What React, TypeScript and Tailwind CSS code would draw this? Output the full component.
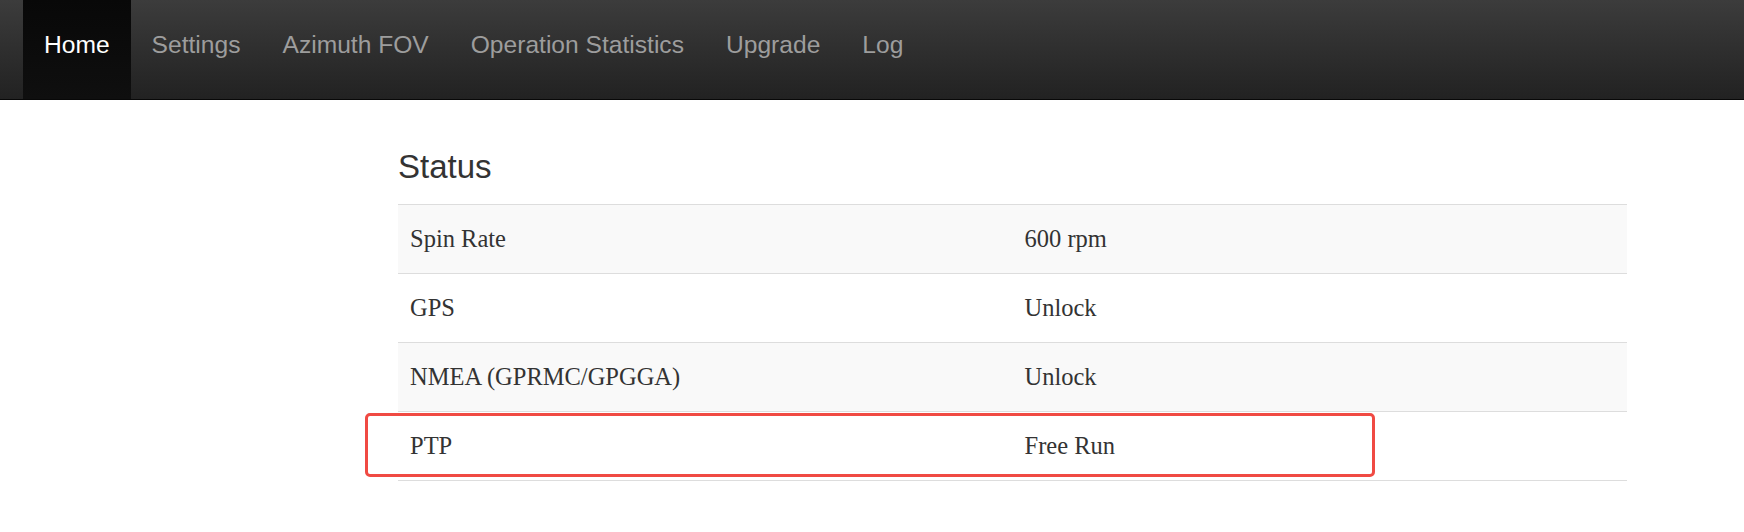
const links = ["Home", "Settings", "Azimuth FOV", "Operation Statistics", "Upgrade", "Log"];

const rows = [
  { name: "Spin Rate", value: "600 rpm" },
  { name: "GPS", value: "Unlock" },
  { name: "NMEA (GPRMC/GPGGA)", value: "Unlock" },
  { name: "PTP", value: "Free Run" },
];

export default function App() {
  return (
    <div className="relative min-h-[532px] bg-white text-[#333]">
      <nav className="h-[100px] border-b border-[#080808] bg-gradient-to-b from-[#3c3c3c] to-[#222] pl-[23px] flex font-['Liberation_Sans',Arial,sans-serif]">
        {links.map((l, i) => (
          <a
            key={l}
            href="#"
            className={
              i === 0
                ? "h-[99px] px-[21px] pt-[31px] text-[24.6px] leading-[28px] text-white bg-gradient-to-b from-[#080808] to-[#0f0f0f]"
                : "h-[99px] px-[21px] pt-[31px] text-[24.6px] leading-[28px] text-[#9d9d9d]"
            }
          >
            {l}
          </a>
        ))}
      </nav>

      <main className="ml-[398px] w-[1229px] pt-[47px]">
        <h3 className="h-[40px] mb-[17px] text-[33px] leading-[40px] font-['Liberation_Sans',Arial,sans-serif]">
          Status
        </h3>
        <div className="border-b border-[#ddd] font-['Liberation_Serif','Times_New_Roman',serif] text-[24.5px] leading-[28px]">
          {rows.map((r, i) => (
            <div
              key={r.name}
              className={
                i % 2 === 0
                  ? "grid grid-cols-2 h-[69px] border-t border-[#ddd] bg-[#f9f9f9]"
                  : "grid grid-cols-2 h-[69px] border-t border-[#ddd]"
              }
            >
              <div className="flex items-center px-[12px]">{r.name}</div>
              <div className="flex items-center px-[12px]">{r.value}</div>
            </div>
          ))}
        </div>
      </main>

      {/* highlight annotation */}
      <div className="absolute left-[365px] top-[413px] w-[1010px] h-[64px] border-[3px] border-[#f04a43] rounded-[5px]" />
    </div>
  );
}
